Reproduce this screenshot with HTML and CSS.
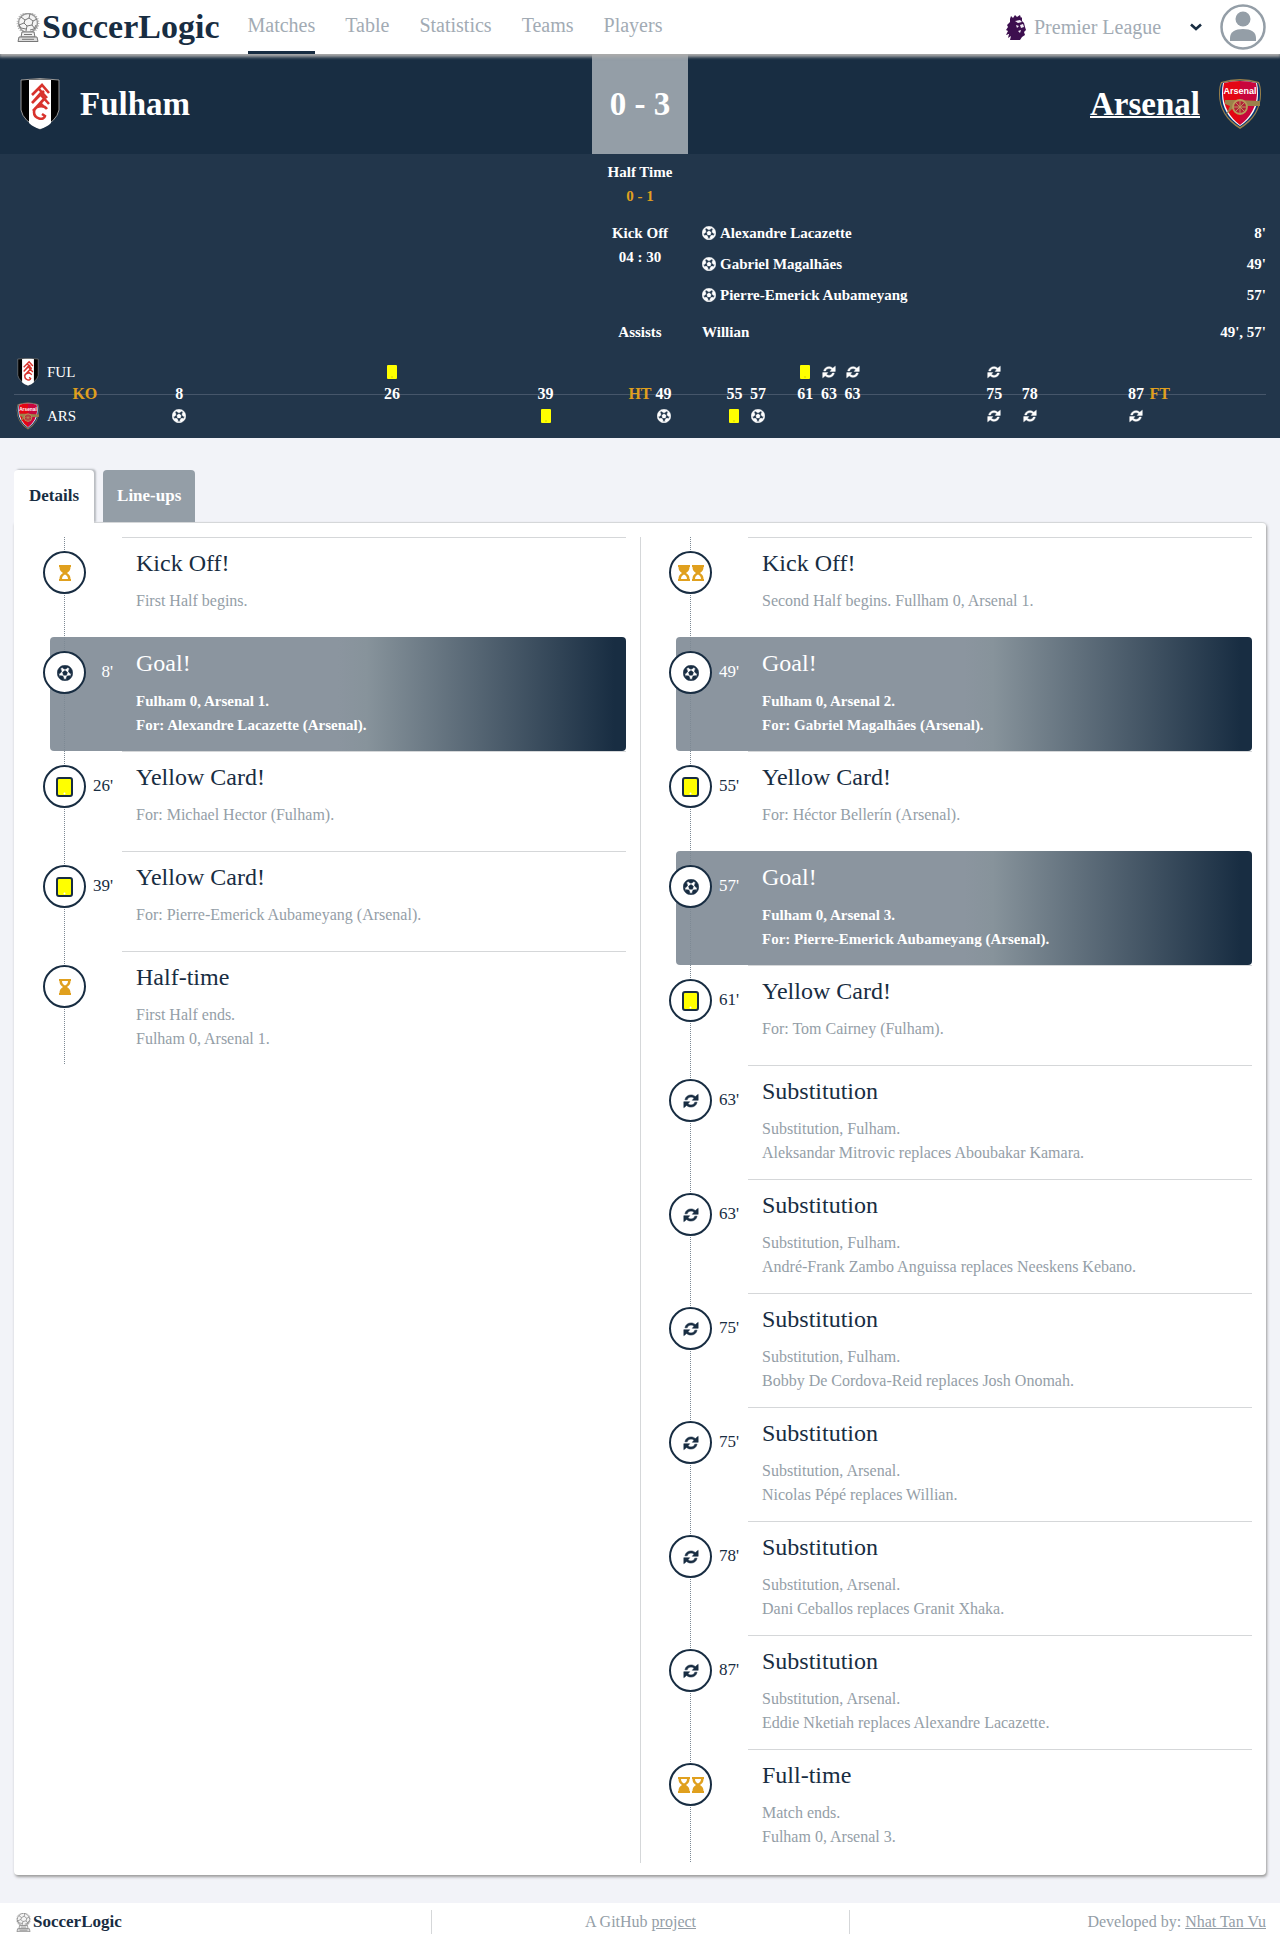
FILE: index.html
```html
<!DOCTYPE html>
<html lang="en">
<head>
<meta charset="utf-8">
<meta name="viewport" content="width=device-width, initial-scale=1">
<title>Fulham 0 - 3 Arsenal | SoccerLogic</title>
<link rel="stylesheet" href="styles.css">
</head>
<body>
<svg class="sprite" aria-hidden="true">
  <symbol id="ball" viewBox="0 0 512 512"><path d="M504 256c0 136.967-111.033 248-248 248S8 392.967 8 256 119.033 8 256 8s248 111.033 248 248zm-48 0l-.003-.282-26.064 22.741-62.679-58.5 16.454-84.355 34.303 3.072c-24.889-34.216-60.004-60.089-100.709-73.141l13.651 31.939L256 139l-74.953-41.525 13.651-31.939c-40.631 13.028-75.78 38.87-100.709 73.141l34.565-3.073 16.192 84.355-62.678 58.5-26.064-22.741-.003.282c0 43.015 13.497 83.952 38.472 117.991l7.704-33.897 85.138 10.447 36.301 77.826-29.902 17.786c40.202 13.122 84.29 13.148 124.572 0l-29.902-17.786 36.301-77.826 85.138-10.447 7.704 33.897C442.503 339.952 456 299.015 456 256zm-248.102 69.571l-29.894-91.312L256 177.732l77.996 56.527-29.622 91.312h-96.476z" stroke="currentColor" stroke-width="16"/></symbol>
  <symbol id="sub" viewBox="0 0 16 16"><path d="M1.9 6.8C2.5 3.700 5 1.900 8 1.900c1.700 0 3.200.6 4.300 1.700l2.900-2.300v6H9.300L11 5.300A4.300 4.300 0 0 0 8 4.100c-1.900 0-3.200 1-3.800 2.700zM14.100 9.200c-.6 3.100-3.100 4.900-6.100 4.900-1.700 0-3.200-.6-4.300-1.700L.8 14.700v-6h5.900L5 10.700a4.300 4.300 0 0 0 3 1.200c1.900 0 3.200-1 3.800-2.700z" stroke="currentColor" stroke-width=".5"/></symbol>
  <symbol id="card" viewBox="0 0 17 20"><rect x="1" y="1" width="15" height="18" rx="2" fill="#ff0" stroke="currentColor" stroke-width="2"/><circle cx="8.500" cy="16.500" r="1" fill="#fff"/></symbol>
  <symbol id="card-mini" viewBox="0 0 10 14"><rect width="10" height="14" rx="1" fill="#ff0"/><circle cx="5" cy="12" r="1" fill="#e0e000"/></symbol>
  <symbol id="glass-start" viewBox="0 0 12 16"><path fill-rule="evenodd" d="M0 0h12v2h-.5c0 3-1 4.500-3.500 6 2.500 1.500 3.500 3 3.500 6h.5v2H0v-2h.5c0-3 1-4.500 3.500-6C1.500 6.500.5 5 .5 2H0zM3 14h6c0-2.200-1.200-3.700-3-4.500-1.800.8-3 2.300-3 4.500z"/></symbol>
  <symbol id="glass-end" viewBox="0 0 12 16"><path fill-rule="evenodd" d="M0 0h12v2h-.5c0 3-1 4.500-3.500 6 2.500 1.500 3.500 3 3.500 6h.5v2H0v-2h.5c0-3 1-4.500 3.500-6C1.500 6.500.5 5 .5 2H0zM3 2c0 2.200 1.200 3.700 3 4.500 1.800-.8 3-2.300 3-4.500z"/></symbol>
  <symbol id="trophy" viewBox="0 0 24 29">
    <circle cx="12" cy="10" r="9.500" fill="#f4f4f4" stroke="#999" stroke-width="1.500"/>
    <circle cx="12" cy="10" r="10.800" fill="none" stroke="#aaa" stroke-width="1.200" stroke-dasharray="1 1.500"/>
    <path d="M9 7l4-2 4 3-1 4-5 1-3-3zM13 5l1-4M17 8l4-2M16 12l3 4M11 13l-1 5M8 10l-5 2M9 7L5 4M3 12l2 3 5 1M14 17l4-1 2-4" fill="none" stroke="#777" stroke-width="1"/>
    <path d="M6 19h12l1 5H5z" fill="#eee" stroke="#777"/><path d="M3 24h18l1 4.500H2z" fill="#ddd" stroke="#777"/><path d="M8 21.500h8M6 26.300h12" stroke="#777"/>
  </symbol>
  <symbol id="fulham" viewBox="0 0 40 52">
    <path d="M1 2Q20-1 39 2v30Q37 43 20 51 3 43 1 32z" fill="#000" stroke="#999" stroke-width="1"/>
    <path d="M9 2q11-1 22 0v43q-4 4-11 6-7-2-11-6z" fill="#fff"/>
    <path d="M12 17l10-10 7 8M22 7M19 11l8 9M12 25l12-12M12 25l8-9 9 10M13 33l12-13M20 25l4 4M27 31c-4-5-13-3-13 3 0 7 10 9 11 4l-3-2" fill="none" stroke="#d8322c" stroke-width="2.600"/>
  </symbol>
  <symbol id="arsenal" viewBox="0 0 44 52">
    <path d="M3 4Q22-2 41 4q2 4 2 12 0 22-21 35Q1 38 1 16 1 8 3 4z" fill="#9c824a"/>
    <path d="M4 5q18-5 36 0 2 4 2 11 0 21-20 33Q2 37 2 16 2 9 4 5z" fill="#063672"/>
    <path d="M5 5q17-4 34 0 1 4 1 11 0 20-18 32Q4 36 4 16 4 9 5 5z" fill="#fff"/>
    <path d="M6 5q8-2 16-2v44Q6 35 5 16 5 9 6 5z" fill="#e30613"/><path d="M38 5q-8-2-16-2v44q16-12 17-31 0-7-1-11z" fill="#c8063c"/>
    <text x="22" y="16" text-anchor="middle" font-family="Liberation Sans, sans-serif" font-size="9" font-weight="700" fill="#fff">Arsenal</text>
    <path d="M7 22h14l21 1v5H30l-4 3H14l-6 6 4-9-5-2z" fill="#9c824a"/>
    <circle cx="22" cy="29" r="7" fill="#b3203a" stroke="#b89b5a" stroke-width="1.800"/><path d="M22 22v14M15 29h14M17 24l10 10M27 24L17 34" stroke="#b89b5a"/>
  </symbol>
</svg>

<header class="topbar">
  <a class="brand" href="#"><svg class="brand-mark" aria-hidden="true"><use href="#trophy"/></svg>SoccerLogic</a>
  <nav class="nav" aria-label="Main">
    <a class="nav-link is-active" href="#">Matches</a>
    <a class="nav-link" href="#">Table</a>
    <a class="nav-link" href="#">Statistics</a>
    <a class="nav-link" href="#">Teams</a>
    <a class="nav-link" href="#">Players</a>
  </nav>
  <div class="league">
    <svg class="league-mark" viewBox="0 0 20 25" aria-hidden="true"><path d="M4 4l1-3 2 2 2-3 2 2 3-2 1 3 1-1v4l2 2 1 4 1 3-2 2 1 3-3 2-2 3-4 1-6-1 1-4-3 2 1-4-3 1 2-4-2-1 2-3-1-2 3-3z" fill="#3d0f4f"/><path d="M9 6l5-1 2 2-4 1zM10 10l3 1-2 2zM14 10l3-1 1 3-3 1zM12 16l3-1-1 3z" fill="#f3edf5"/></svg>
    <div class="picker">
      <select class="picker-select" aria-label="League"><option>Premier League</option></select>
      <svg class="picker-arrow" viewBox="0 0 12 8" aria-hidden="true"><path d="M1 1.500l5 4.500 5-4.500" fill="none" stroke="#182d42" stroke-width="2.600"/></svg>
    </div>
    <button class="avatar" type="button" aria-label="Account"><svg viewBox="0 0 46 46" aria-hidden="true"><circle cx="23" cy="23" r="21.500" fill="none" stroke="#949ea7" stroke-width="2.500"/><circle cx="23" cy="15" r="7.500" fill="#949ea7"/><path d="M10 37v-3c0-6 5-9 13-9s13 3 13 9v3q-1 0-2 0H12q-1 0-2 0z" fill="#949ea7"/></svg></button>
  </div>
</header>

<main>
  <section class="scoreboard">
    <div class="team team-home"><svg class="crest" aria-hidden="true"><use href="#fulham"/></svg><a href="#">Fulham</a></div>
    <div class="score">0 - 3</div>
    <div class="team team-away"><a class="is-winner" href="#">Arsenal</a><svg class="crest" aria-hidden="true"><use href="#arsenal"/></svg></div>
  </section>

  <section class="summary">
    <div class="facts">
      <div class="fact">Half Time<strong class="accent">0 - 1</strong></div>
      <div class="fact">Kick Off<span>04 : 30</span></div>
      <ul class="scorers">
        <li><svg class="icon-14" aria-hidden="true"><use href="#ball"/></svg>Alexandre Lacazette<span class="when">8'</span></li>
        <li><svg class="icon-14" aria-hidden="true"><use href="#ball"/></svg>Gabriel Magalhães<span class="when">49'</span></li>
        <li><svg class="icon-14" aria-hidden="true"><use href="#ball"/></svg>Pierre-Emerick Aubameyang<span class="when">57'</span></li>
      </ul>
      <div class="fact">Assists</div>
      <ul class="scorers"><li>Willian<span class="when">49', 57'</span></li></ul>
    </div>

    <div class="timeline">
      <div class="side home"><svg aria-hidden="true"><use href="#fulham"/></svg>FUL</div>
      <div class="side away"><svg aria-hidden="true"><use href="#arsenal"/></svg>ARS</div>
      <div class="axis"></div>
      <span class="tick accent" style="grid-column-start:6">KO</span>
      <span class="tick" style="grid-column-start:14">8</span>
      <span class="tick" style="grid-column-start:32">26</span>
      <span class="tick" style="grid-column-start:45">39</span>
      <span class="tick accent" style="grid-column-start:53">HT</span>
      <span class="tick" style="grid-column-start:55">49</span>
      <span class="tick" style="grid-column-start:61">55</span>
      <span class="tick" style="grid-column-start:63">57</span>
      <span class="tick" style="grid-column-start:67">61</span>
      <span class="tick" style="grid-column-start:69">63</span>
      <span class="tick" style="grid-column-start:71">63</span>
      <span class="tick" style="grid-column-start:83">75</span>
      <span class="tick" style="grid-column-start:86">78</span>
      <span class="tick" style="grid-column-start:95">87</span>
      <span class="tick accent" style="grid-column-start:97">FT</span>
      <svg class="mark home" style="grid-column-start:32"><use href="#card-mini"/></svg>
      <svg class="mark home" style="grid-column-start:67"><use href="#card-mini"/></svg>
      <svg class="mark home" style="grid-column-start:69"><use href="#sub"/></svg>
      <svg class="mark home" style="grid-column-start:71"><use href="#sub"/></svg>
      <svg class="mark home" style="grid-column-start:83"><use href="#sub"/></svg>
      <svg class="mark away" style="grid-column-start:14"><use href="#ball"/></svg>
      <svg class="mark away" style="grid-column-start:45"><use href="#card-mini"/></svg>
      <svg class="mark away" style="grid-column-start:55"><use href="#ball"/></svg>
      <svg class="mark away" style="grid-column-start:61"><use href="#card-mini"/></svg>
      <svg class="mark away" style="grid-column-start:63"><use href="#ball"/></svg>
      <svg class="mark away" style="grid-column-start:83"><use href="#sub"/></svg>
      <svg class="mark away" style="grid-column-start:86"><use href="#sub"/></svg>
      <svg class="mark away" style="grid-column-start:95"><use href="#sub"/></svg>
    </div>
  </section>

  <div class="content">
    <div class="tabs" role="tablist">
      <button class="tab is-active" type="button" role="tab" aria-selected="true">Details</button>
      <button class="tab" type="button" role="tab" aria-selected="false">Line-ups</button>
    </div>
    <section class="panel">
      <ol class="events">
        <li class="event"><div class="rail"><span class="badge gold"><svg><use href="#glass-start"/></svg></span></div><span class="minute"></span><div class="body"><h3>Kick Off!</h3><p>First Half begins.</p></div></li>
        <li class="event goal"><div class="rail"><span class="badge"><svg><use href="#ball"/></svg></span></div><span class="minute">8'</span><div class="body"><h3>Goal!</h3><p>Fulham 0, Arsenal 1.<br>For: Alexandre Lacazette (Arsenal).</p></div></li>
        <li class="event"><div class="rail"><span class="badge card"><svg><use href="#card"/></svg></span></div><span class="minute">26'</span><div class="body"><h3>Yellow Card!</h3><p>For: Michael Hector (Fulham).</p></div></li>
        <li class="event"><div class="rail"><span class="badge card"><svg><use href="#card"/></svg></span></div><span class="minute">39'</span><div class="body"><h3>Yellow Card!</h3><p>For: Pierre-Emerick Aubameyang (Arsenal).</p></div></li>
        <li class="event"><div class="rail"><span class="badge gold"><svg><use href="#glass-end"/></svg></span></div><span class="minute"></span><div class="body"><h3>Half-time</h3><p>First Half ends.<br>Fulham 0, Arsenal 1.</p></div></li>
      </ol>
      <ol class="events">
        <li class="event"><div class="rail"><span class="badge gold"><svg><use href="#glass-start"/></svg><svg><use href="#glass-start"/></svg></span></div><span class="minute"></span><div class="body"><h3>Kick Off!</h3><p>Second Half begins. Fullham 0, Arsenal 1.</p></div></li>
        <li class="event goal"><div class="rail"><span class="badge"><svg><use href="#ball"/></svg></span></div><span class="minute">49'</span><div class="body"><h3>Goal!</h3><p>Fulham 0, Arsenal 2.<br>For: Gabriel Magalhães (Arsenal).</p></div></li>
        <li class="event"><div class="rail"><span class="badge card"><svg><use href="#card"/></svg></span></div><span class="minute">55'</span><div class="body"><h3>Yellow Card!</h3><p>For: Héctor Bellerín (Arsenal).</p></div></li>
        <li class="event goal"><div class="rail"><span class="badge"><svg><use href="#ball"/></svg></span></div><span class="minute">57'</span><div class="body"><h3>Goal!</h3><p>Fulham 0, Arsenal 3.<br>For: Pierre-Emerick Aubameyang (Arsenal).</p></div></li>
        <li class="event"><div class="rail"><span class="badge card"><svg><use href="#card"/></svg></span></div><span class="minute">61'</span><div class="body"><h3>Yellow Card!</h3><p>For: Tom Cairney (Fulham).</p></div></li>
        <li class="event"><div class="rail"><span class="badge"><svg><use href="#sub"/></svg></span></div><span class="minute">63'</span><div class="body"><h3>Substitution</h3><p>Substitution, Fulham.<br>Aleksandar Mitrovic replaces Aboubakar Kamara.</p></div></li>
        <li class="event"><div class="rail"><span class="badge"><svg><use href="#sub"/></svg></span></div><span class="minute">63'</span><div class="body"><h3>Substitution</h3><p>Substitution, Fulham.<br>André-Frank Zambo Anguissa replaces Neeskens Kebano.</p></div></li>
        <li class="event"><div class="rail"><span class="badge"><svg><use href="#sub"/></svg></span></div><span class="minute">75'</span><div class="body"><h3>Substitution</h3><p>Substitution, Fulham.<br>Bobby De Cordova-Reid replaces Josh Onomah.</p></div></li>
        <li class="event"><div class="rail"><span class="badge"><svg><use href="#sub"/></svg></span></div><span class="minute">75'</span><div class="body"><h3>Substitution</h3><p>Substitution, Arsenal.<br>Nicolas Pépé replaces Willian.</p></div></li>
        <li class="event"><div class="rail"><span class="badge"><svg><use href="#sub"/></svg></span></div><span class="minute">78'</span><div class="body"><h3>Substitution</h3><p>Substitution, Arsenal.<br>Dani Ceballos replaces Granit Xhaka.</p></div></li>
        <li class="event"><div class="rail"><span class="badge"><svg><use href="#sub"/></svg></span></div><span class="minute">87'</span><div class="body"><h3>Substitution</h3><p>Substitution, Arsenal.<br>Eddie Nketiah replaces Alexandre Lacazette.</p></div></li>
        <li class="event"><div class="rail"><span class="badge gold"><svg><use href="#glass-end"/></svg><svg><use href="#glass-end"/></svg></span></div><span class="minute"></span><div class="body"><h3>Full-time</h3><p>Match ends.<br>Fulham 0, Arsenal 3.</p></div></li>
      </ol>
    </section>
  </div>
</main>

<footer class="footer">
  <a class="footer-brand" href="#"><svg aria-hidden="true"><use href="#trophy"/></svg>SoccerLogic</a>
  <p>A GitHub <a href="#">project</a></p>
  <p>Developed by: <a href="#">Nhat Tan Vu</a></p>
</footer>
</body>
</html>
```
FILE: styles.css
```css
:root {
  --navy: #182d42;
  --slate: #22364b;
  --grey: #949ea7;
  --gold: #e0a01e;
  --line: #d5d7d9;
}

* { box-sizing: border-box; }

body {
  margin: 0;
  background: #f2f3f8;
  color: var(--navy);
  font: 16px/24px "Liberation Serif", "Times New Roman", serif;
}

a { color: inherit; text-decoration: none; }
h3, p, ol, ul { margin: 0; padding: 0; }
ol, ul { list-style: none; }
svg { display: block; fill: currentColor; flex: none; }
button, select { font-family: inherit; border: 0; cursor: pointer; }
.sprite { width: 0; height: 0; position: absolute; }
.accent { color: var(--gold); }

/* Top bar */
.topbar {
  position: relative;
  z-index: 1;
  display: flex;
  height: 54px;
  padding: 0 14px;
  background: #fff;
  box-shadow: 0 2px 3px 1px #aaa;
}
.brand {
  display: flex;
  align-items: center;
  margin-right: 28px;
  font-size: 34px;
  font-weight: 700;
}
.brand-mark { width: 28px; height: 29px; }
.nav { display: flex; gap: 30px; }
.nav-link {
  border-bottom: 3px solid transparent;
  color: #a2abb4;
  font-size: 20px;
  line-height: 51px;
}
.nav-link.is-active { border-color: var(--navy); }
.league { display: flex; align-items: center; margin-left: auto; }
.league-mark { width: 20px; height: 25px; margin-right: 8px; }
.picker { display: grid; align-items: center; width: 168px; margin-right: 18px; }
.picker-select {
  grid-area: 1 / 1;
  appearance: none;
  padding: 0;
  background: none;
  color: #a2abb4;
  font-size: 20px;
  line-height: 51px;
}
.picker-arrow { grid-area: 1 / 1; justify-self: end; width: 12px; height: 8px; pointer-events: none; }
.avatar { width: 46px; height: 46px; padding: 0; background: none; }

/* Scoreboard */
.scoreboard {
  display: grid;
  grid-template-columns: 1fr 96px 1fr;
  height: 100px;
  background: var(--navy);
  color: #fff;
  font-size: 33px;
  font-weight: 700;
}
.team { display: flex; align-items: center; gap: 14px; padding: 0 14px; }
.team-away { justify-content: flex-end; }
.crest { width: 52px; height: 52px; }
.is-winner { text-decoration: underline; text-decoration-thickness: 2px; }
.score { display: grid; place-items: center; background: var(--grey); }

.summary {
  padding: 6px 14px 8px;
  background: var(--slate);
  color: #fff;
  font-size: 15px;
  font-weight: 700;
}
.facts {
  display: grid;
  grid-template-columns: 1fr 96px 1fr;
  gap: 13px 14px;
}
.fact { display: flex; flex-direction: column; grid-column: 2; text-align: center; }
.scorers { display: flex; flex-direction: column; gap: 7px; grid-column: 3; }
.scorers li { display: flex; align-items: center; gap: 4px; }
.when { margin-left: auto; }
.icon-14 { width: 14px; height: 14px; }

/* Match timeline: the grid has one column for each minute, plus the margins */
.timeline {
  display: grid;
  grid-template-columns: repeat(106, minmax(0, 1fr));
  grid-template-rows: 28px 16px 28px;
  align-items: center;
  margin-top: 14px;
  line-height: 16px;
}
.home { grid-row: 1; }
.away { grid-row: 3; }
.side { display: flex; align-items: center; gap: 5px; grid-column: 1 / span 6; font-weight: 400; }
.side svg { width: 28px; height: 28px; }
.axis { grid-area: 2 / 1 / 3 / -1; height: 1px; background: #46566a; }
.tick { grid-row: 2; grid-column-end: span 2; justify-self: center; font-size: 16px; }
.mark { grid-column-end: span 2; justify-self: center; width: 14px; height: 14px; }

/* Tabs and events */
.content { padding: 32px 14px 28px; }
.tabs { display: flex; gap: 9px; }
.tab {
  height: 52px;
  padding: 0 14px;
  border-radius: 4px 4px 0 0;
  background: var(--grey);
  color: #fff;
  font-size: 17px;
  font-weight: 700;
}
.tab.is-active {
  position: relative;
  height: 53px;
  margin-bottom: -1px;
  padding: 0 15px 1px;
  background: #fff;
  color: var(--navy);
  box-shadow: 2px -1px 2px #b8bbc0;
  clip-path: inset(-4px -4px 0 0);
}
.panel {
  display: grid;
  grid-template-columns: 1fr 1fr;
  padding: 14px 0 12px;
  border-top: 1px solid var(--line);
  border-radius: 0 4px 4px 4px;
  background: #fff;
  box-shadow: 1px 2px 3px #999;
}
.events + .events { background: linear-gradient(var(--line), var(--line)) 0 0 / 1px 100% no-repeat; }
.event {
  display: grid;
  grid-template-columns: 36px 36px 1fr;
  min-height: 100px;
  margin: 0 14px 0 36px;
}
.rail {
  width: 43px;
  margin-left: -7px;
  padding-top: 14px;
  background: repeating-linear-gradient(#7d8994 0 1px, transparent 1px 2px) 21px 0 / 1px 100% no-repeat;
}
.badge {
  display: flex;
  align-items: center;
  justify-content: center;
  gap: 2px;
  height: 43px;
  border: 2px solid var(--navy);
  border-radius: 50%;
  background: #fff;
  color: var(--navy);
}
.badge svg { width: 16px; height: 16px; }
.badge.gold { color: var(--gold); }
.badge.gold svg { width: 12px; }
.badge.card svg { width: 17px; height: 20px; }
.minute { padding: 23px 9px 0 0; font-size: 17px; text-align: right; }
.body { padding: 11px 0 14px 14px; border-top: 1px solid var(--line); }
.body h3 { font-size: 24px; font-weight: 400; line-height: 28px; }
.body p { margin-top: 12px; color: var(--grey); }
.goal {
  border-radius: 4px;
  background: linear-gradient(to right, #8b959f, #8b959f 50%, #87939b 55%, var(--navy) 98%);
  color: #fff;
}
.goal .body { border-color: transparent; }
.goal .body p { color: #fff; font-size: 15px; font-weight: 700; }

/* Footer */
.footer {
  display: grid;
  grid-template-columns: 1fr 1fr 1fr;
  padding: 7px 14px;
  background: #fff;
  color: var(--grey);
}
.footer > * + * { border-left: 1px solid var(--line); text-align: center; }
.footer > :last-child { text-align: right; }
.footer p a { text-decoration: underline; }
.footer-brand { display: flex; align-items: center; color: var(--navy); font-size: 17px; font-weight: 700; }
.footer-brand svg { width: 19px; height: 19px; }
```
